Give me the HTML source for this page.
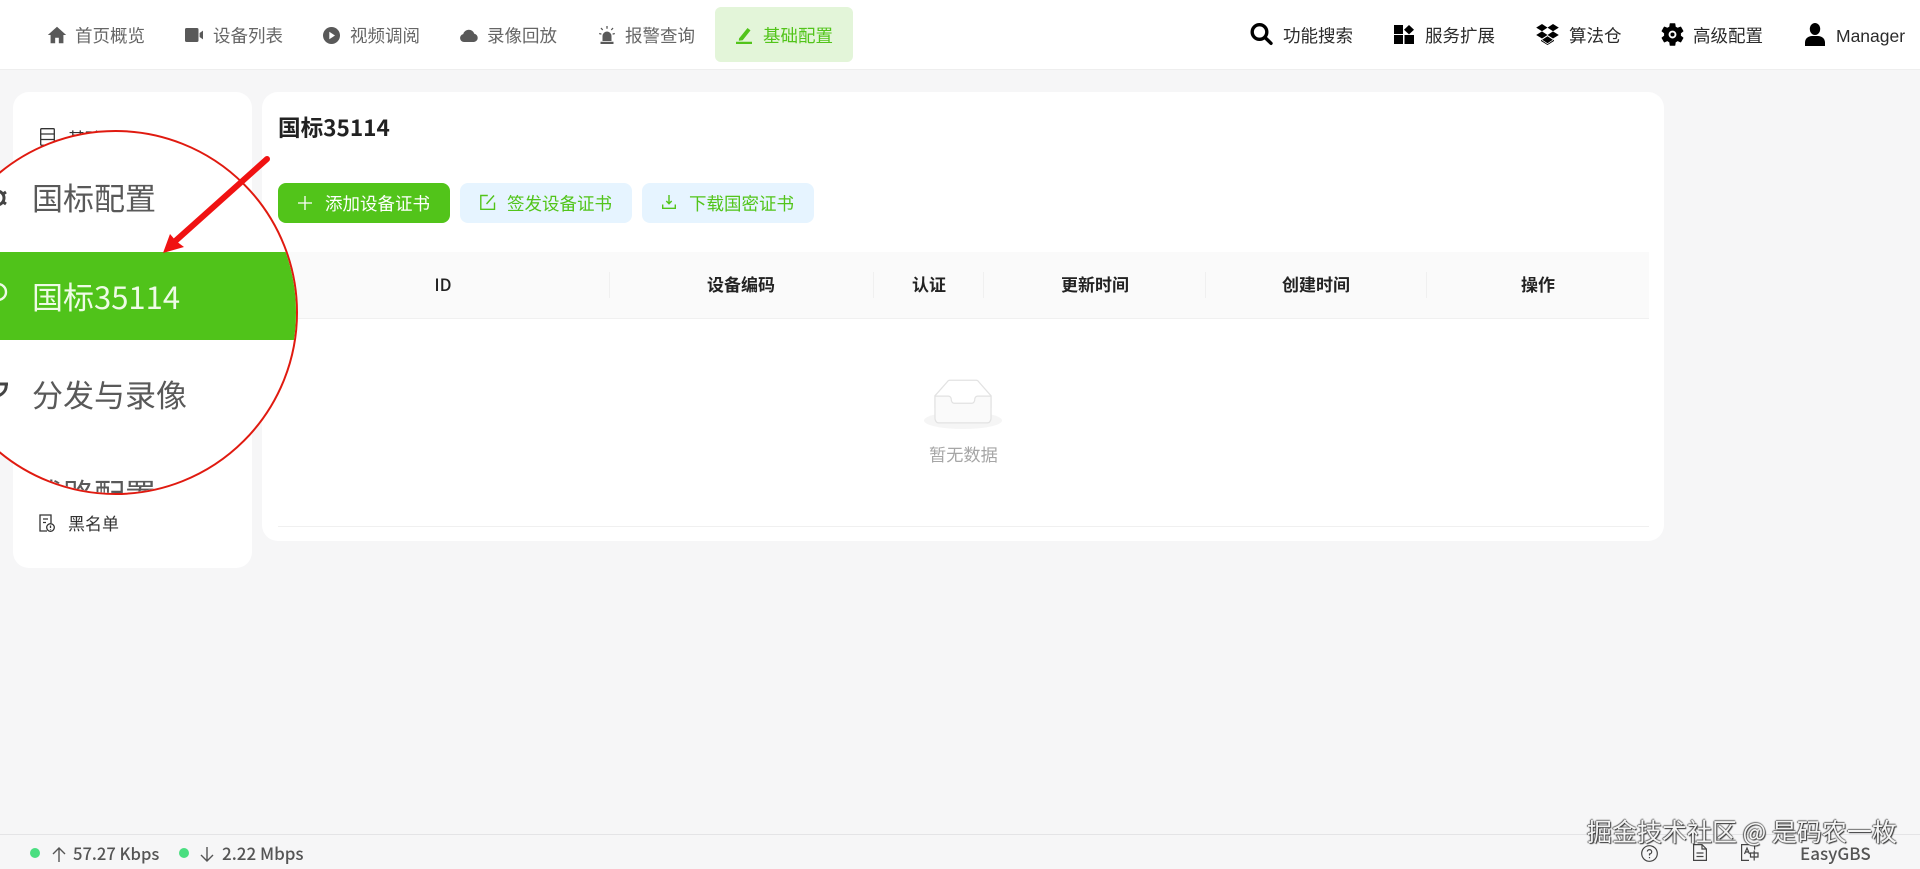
<!DOCTYPE html>
<html lang="zh-CN"><head><meta charset="utf-8"><title>国标35114</title>
<style>
html,body{margin:0;padding:0;width:1920px;height:869px;overflow:hidden;background:#f6f6f7;font-family:"Liberation Sans","Noto Sans CJK SC",sans-serif}
*{box-sizing:border-box}
.a{position:absolute}
.t{position:absolute;white-space:nowrap;line-height:1;font-family:"Noto Sans CJK SC","Liberation Sans",sans-serif}
.n{font-size:17.5px;top:27px;color:#666}
.r{font-size:17.5px;top:27px;color:#2b2b2b}
.h{font-size:17px;top:275px;color:#222;font-weight:700;transform:translateX(-50%)}
.d{position:absolute;top:272px;width:1px;height:26px;background:#f0f0f0}
.b{position:absolute;top:183px;height:40px;width:172px;border-radius:8px;background:#e6f4ff}
.bt{font-size:17.5px;top:195px;color:#52c41a}
.c{font-size:31px;color:#595959}
svg{position:absolute;display:block;overflow:visible}
</style></head><body>

<!-- top nav -->
<div class="a" style="left:0;top:0;width:1920px;height:70px;background:#fff;border-bottom:1px solid #eeeeee"></div>
<div class="a" style="left:715px;top:7px;width:138px;height:55px;border-radius:6px;background:#e3f5d9"></div>

<svg style="left:46px;top:24px" width="22" height="22" viewBox="0 0 24 24"><path fill="#595959" d="M12 3 2 12h3v9h5v-6h4v6h5v-9h3z"/></svg>
<span class="t n" style="left:75px">首页概览</span>

<svg style="left:185px;top:28px" width="18" height="14" viewBox="0 0 18 14"><rect width="13.5" height="14" rx="1.6" fill="#595959"/><path fill="#595959" d="M14.6 5 18 2.6v8.8L14.6 9z"/></svg>
<span class="t n" style="left:213px">设备列表</span>

<svg style="left:323px;top:27px" width="17" height="17" viewBox="0 0 17 17"><circle cx="8.5" cy="8.5" r="8.5" fill="#595959"/><path fill="#fff" d="M6.3 4.8 12 8.5l-5.7 3.7z"/></svg>
<span class="t n" style="left:350px">视频调阅</span>

<svg style="left:460px;top:28px" width="18" height="14" viewBox="0 0 18 14"><path fill="#595959" d="M4 14A4 4 0 0 1 3.2 6.1 5.8 5.8 0 0 1 14.300 5.700 4.200 4.200 0 0 1 14 14z"/></svg>
<span class="t n" style="left:487px">录像回放</span>

<svg style="left:599px;top:26px" width="16" height="18" viewBox="0 0 16 18"><path fill="#595959" d="M3.500 15V10a4.500 4.500 0 0 1 9 0v5zM1.500 15.800h13V18h-13z"/><path stroke="#595959" stroke-width="1.300" d="M8 0v2.800M2 2l1.700 2M14 2l-1.700 2M.2 7.500l2.200.6M15.800 7.500l-2.200.6"/></svg>
<span class="t n" style="left:625px">报警查询</span>

<svg style="left:736px;top:27px" width="17" height="17" viewBox="0 0 17 17"><path fill="#52c41a" d="M3 11.500 11.500 1l3 2.400-7.800 9.800-3.900.5zM0 14.800h16V17H0z"/></svg>
<span class="t n" style="left:763px;color:#52c41a">基础配置</span>

<svg style="left:1250px;top:23px" width="23" height="22" viewBox="0 0 23 22"><circle cx="9.500" cy="9" r="7.300" fill="none" stroke="#000" stroke-width="3.400"/><path stroke="#000" stroke-width="3.400" stroke-linecap="round" d="M15 14.500l6 5.800"/></svg>
<span class="t r" style="left:1283px">功能搜索</span>

<svg style="left:1394px;top:25px" width="20" height="19" viewBox="0 0 20 19"><path d="M0 0h9v9H0zM0 10h9v9H0zM10.500 10H20v9h-9.500zM15 0l5 4.700L15 9.400l-5-4.700z"/></svg>
<span class="t r" style="left:1425px">服务扩展</span>

<svg style="left:1536px;top:24px" width="23" height="21" viewBox="0 0 23 21"><path d="M6 0l5.500 3.600L6 7.200.2 3.600zM17 0l5.800 3.600L17 7.200l-5.500-3.600zM6 7.400l5.500 3.600L6 14.500.2 11zM17 7.400l5.800 3.600-5.800 3.500-5.500-3.500zM6.200 15.700l5.300-3.400 5.300 3.400-5.300 3.500L6.200 15.700z"/><path d="M5 15.800l6.500 4.300 6.500-4.300V17l-6.500 4L5 17z"/></svg>
<span class="t r" style="left:1569px">算法仓</span>

<svg style="left:1659px;top:21px" width="27" height="27" viewBox="0 0 24 24"><path d="M12 15.500A3.500 3.500 0 0 1 8.500 12 3.500 3.500 0 0 1 12 8.500a3.500 3.500 0 0 1 3.500 3.500 3.500 3.500 0 0 1-3.500 3.500m7.430-2.530c.04-.32.07-.64.07-.97 0-.33-.03-.66-.07-1l2.110-1.630c.19-.15.24-.42.12-.64l-2-3.460c-.12-.22-.39-.31-.61-.22l-2.490 1c-.52-.39-1.060-.73-1.690-.98l-.37-2.650A.506.506 0 0 0 14 2h-4c-.25 0-.46.18-.5.42l-.37 2.650c-.63.25-1.170.59-1.690.98l-2.490-1c-.22-.09-.49 0-.61.22l-2 3.460c-.13.22-.07.49.12.64L4.570 11c-.04.34-.07.67-.07 1 0 .33.03.65.07.97l-2.110 1.660c-.19.15-.25.42-.12.64l2 3.460c.12.22.39.3.61.22l2.490-1.010c.52.4 1.060.74 1.690.99l.37 2.650c.04.24.25.42.5.42h4c.25 0 .46-.18.5-.42l.37-2.650c.63-.26 1.170-.59 1.690-.99l2.490 1.010c.22.08.49 0 .61-.22l2-3.460c.12-.22.07-.49-.12-.64l-2.110-1.660z"/><circle cx="12" cy="12" r="1.800"/></svg>
<span class="t r" style="left:1693px">高级配置</span>

<svg style="left:1805px;top:23px" width="20" height="23" viewBox="0 0 20 23"><ellipse cx="10" cy="6" rx="5.200" ry="6"/><path d="M0 23v-3.500C0 15.500 3.500 13 7 13h6c3.500 0 7 2.500 7 6.500V23z"/></svg>
<span class="t r" style="left:1836px;font-family:'Liberation Sans',sans-serif;font-size:17.500px;top:28px">Manager</span>

<!-- sidebar -->
<div class="a" style="left:13px;top:92px;width:239px;height:476px;border-radius:16px;background:#fff"></div>
<svg style="left:40px;top:128px" width="15" height="18" viewBox="0 0 15 18" fill="none" stroke="#333" stroke-width="1.300"><rect x=".7" y=".7" width="13.600" height="16.600" rx="1"/><path d="M.7 6h13.600M.7 11.500h13.600"/></svg>
<span class="t" style="left:68px;top:129px;font-size:17px;color:#333">基础配置</span>
<svg style="left:39px;top:514px" width="16" height="18" viewBox="0 0 16 18" fill="none" stroke="#333" stroke-width="1.300"><path d="M8 17H1V1h11v8"/><path d="M4 5h5M4 8.500h3"/><circle cx="11.500" cy="13.500" r="3.800"/><path d="M11.500 11.500v2.500M11.500 15v.6"/></svg>
<span class="t" style="left:68px;top:514px;font-size:17px;color:#333">黑名单</span>

<!-- content card -->
<div class="a" style="left:262px;top:92px;width:1402px;height:449px;border-radius:16px;background:#fff"></div>
<span class="t" style="left:278px;top:116px;font-size:22.6px;font-weight:700;color:#222">国标35114</span>

<div class="b" style="left:278px;background:#52c41a"></div>
<svg style="left:298px;top:196px" width="14" height="14" viewBox="0 0 14 14"><path stroke="#fff" stroke-width="1.300" d="M7 0v14M0 7h14"/></svg>
<span class="t bt" style="left:325px;color:#fff">添加设备证书</span>

<div class="b" style="left:460px"></div>
<svg style="left:480px;top:194px" width="16" height="16" viewBox="0 0 16 16" fill="none" stroke="#52c41a" stroke-width="1.400"><path d="M14.500 8.500v6.800H.8V1.500h7"/><path d="M6.500 10 14 1.500"/></svg>
<span class="t bt" style="left:507px">签发设备证书</span>

<div class="b" style="left:642px"></div>
<svg style="left:662px;top:195px" width="14" height="14" viewBox="0 0 14 14" fill="none" stroke="#52c41a" stroke-width="1.400"><path d="M7 0v8.500M4.300 6 7 8.700 9.700 6"/><path d="M.7 9.500v3.800h12.600V9.500"/></svg>
<span class="t bt" style="left:689px">下载国密证书</span>

<!-- table -->
<div class="a" style="left:278px;top:252px;width:1371px;height:67px;background:#fafafa;border-bottom:1px solid #f0f0f0"></div>
<div class="d" style="left:609px"></div><div class="d" style="left:873px"></div><div class="d" style="left:983px"></div><div class="d" style="left:1205px"></div><div class="d" style="left:1426px"></div>
<span class="t h" style="left:443px;font-weight:500">ID</span>
<span class="t h" style="left:741px">设备编码</span>
<span class="t h" style="left:929px">认证</span>
<span class="t h" style="left:1095px">更新时间</span>
<span class="t h" style="left:1316px">创建时间</span>
<span class="t h" style="left:1538px">操作</span>

<svg style="left:924px;top:379px" width="78" height="50" viewBox="0 0 64 41"><g transform="translate(0 1)" fill="none" fill-rule="evenodd"><ellipse fill="#f5f5f5" cx="32" cy="33" rx="32" ry="7"/><g fill-rule="nonzero" stroke="#e2e2e2"><path d="M55 12.760L44.854 1.258C44.367.474 43.656 0 42.907 0H21.093c-.749 0-1.460.474-1.947 1.257L9 12.761V22h46v-9.240z"/><path d="M41.613 15.931c0-1.605.994-2.930 2.227-2.931H55v18.137C55 33.260 53.680 35 52.050 35h-40.100C10.320 35 9 33.259 9 31.137V13h11.160c1.233 0 2.227 1.323 2.227 2.928v.022c0 1.605 1.005 2.901 2.237 2.901h14.752c1.232 0 2.237-1.308 2.237-2.913v-.007z" fill="#fafafa"/></g></g></svg>
<span class="t" style="left:929px;top:445px;font-size:17.2px;color:#a6a6a6">暂无数据</span>
<div class="a" style="left:278px;top:526px;width:1371px;height:1px;background:#f0f0f0"></div>

<!-- zoom circle -->
<div class="a" style="left:-67px;top:130px;width:365px;height:365px;border-radius:50%;background:#fff;border:2px solid #e01a10;overflow:hidden">
  <div class="a" style="left:0;top:120px;width:365px;height:88px;background:#50c31a"></div>
  <span class="t c" style="left:97px;top:49px">国标配置</span>
  <span class="t c" style="left:97px;top:148px;color:#eefbe6">国标35114</span>
  <span class="t c" style="left:97px;top:246px">分发与录像</span>
  <span class="t c" style="left:97px;top:345px">线路配置</span>
  <svg style="left:49px;top:55px" width="26" height="22" viewBox="0 0 26 22" fill="none" stroke="#444" stroke-width="3"><circle cx="13" cy="11" r="7"/><path d="M13 1v3M13 18v3M4 5l3 2M22 5l-3 2M4 17l3-2M22 17l-3-2"/></svg>
  <svg style="left:49px;top:150px" width="26" height="24" viewBox="0 0 26 24" fill="none" stroke="#eefbe6" stroke-width="2.400"><circle cx="14" cy="10" r="8"/><path d="M14 18v5"/></svg>
  <svg style="left:49px;top:250px" width="26" height="16" viewBox="0 0 26 16" fill="none" stroke="#444" stroke-width="3"><path d="M12 2h12M22 2c1 6-3 10-8 12"/></svg>
</div>

<!-- arrow -->
<svg style="left:0;top:0" width="1920" height="869" viewBox="0 0 1920 869"><path d="M267 159 172 244" stroke="#f01212" stroke-width="6" stroke-linecap="round" fill="none"/><path fill="#f01212" d="M163 253 170 234 176 241 184 247z"/></svg>

<!-- footer -->
<div class="a" style="left:0;top:834px;width:1920px;height:35px;border-top:1px solid #e4e4e6;background:#f6f6f7"></div>
<div class="a" style="left:30px;top:848px;width:10px;height:10px;border-radius:50%;background:#4ade80"></div>
<svg style="left:52px;top:847px" width="14" height="15" viewBox="0 0 14 15" fill="none" stroke="#555" stroke-width="1.400"><path d="M7 15V1M1 7l6-6 6 6"/></svg>
<span class="t" style="left:73px;top:845px;font-size:16.6px;font-weight:500;color:#555">57.27 Kbps</span>
<div class="a" style="left:179px;top:848px;width:10px;height:10px;border-radius:50%;background:#4ade80"></div>
<svg style="left:200px;top:847px" width="14" height="15" viewBox="0 0 14 15" fill="none" stroke="#555" stroke-width="1.400"><path d="M7 0v14M1 8l6 6 6-6"/></svg>
<span class="t" style="left:222px;top:844px;font-size:17px;font-weight:500;color:#555">2.22 Mbps</span>

<svg style="left:1641px;top:845px" width="17" height="17" viewBox="0 0 17 17" fill="none" stroke="#444" stroke-width="1.200"><circle cx="8.500" cy="8.500" r="7.800"/><path d="M6.300 6.500A2.200 2.200 0 1 1 8.500 9v1.500M8.500 12v1.200"/></svg>
<svg style="left:1693px;top:844px" width="14" height="17" viewBox="0 0 14 17" fill="none" stroke="#444" stroke-width="1.200"><path d="M.6.600h8.400l4.400 4.400v11.400H.6zM9 .6V5h4.400M3.500 9h7M3.500 12.500h7"/></svg>
<svg style="left:1741px;top:844px" width="18" height="17" viewBox="0 0 18 17" fill="none" stroke="#444" stroke-width="1.200"><path d="M8 16.400H.6V.6h13v5"/><path d="M3.500 10 6 4l2.500 6M4.500 8h3"/><path d="M9.500 9h7.500v4H9.500zM13.200 6.500v10"/></svg>
<span class="t" style="left:1800px;top:844px;font-size:17px;font-weight:500;color:#555">EasyGBS</span>

<span class="t" style="left:1587px;top:819px;font-size:25px;color:#f4f4f4;text-shadow:1px 1px 1px #333,-1px 0 1px #555,0 -1px 1px #777;font-family:'Noto Sans CJK SC',sans-serif">掘金技术社区 @ 是码农一枚</span>
</body></html>
